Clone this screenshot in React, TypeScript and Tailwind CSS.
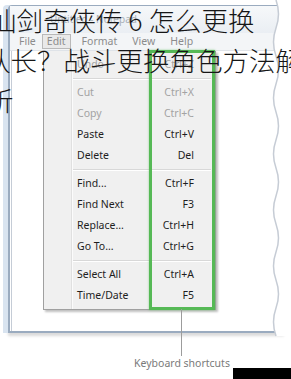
const menuRows: ({ label: string; key: string; off?: boolean } | "sep")[] = [
  { label: "Undo", key: "Ctrl+Z", off: true },
  "sep",
  { label: "Cut", key: "Ctrl+X", off: true },
  { label: "Copy", key: "Ctrl+C", off: true },
  { label: "Paste", key: "Ctrl+V" },
  { label: "Delete", key: "Del" },
  "sep",
  { label: "Find...", key: "Ctrl+F" },
  { label: "Find Next", key: "F3" },
  { label: "Replace...", key: "Ctrl+H" },
  { label: "Go To...", key: "Ctrl+G" },
  "sep",
  { label: "Select All", key: "Ctrl+A" },
  { label: "Time/Date", key: "F5" },
];

function TornEdge() {
  // wavy torn right edge of the screenshot
  let d = "M276 0";
  let y = 0;
  let flip = false;
  while (y < 336) {
    const x = flip ? 271 : 281;
    d += ` Q${x} ${y + 14} 276 ${y + 28}`;
    y += 28;
    flip = !flip;
  }
  const fill = d + " L291 " + y + " L291 0 Z";
  return (
    <svg className="absolute left-0 top-0" width="291" height="340" viewBox="0 0 291 340">
      <path d={fill} fill="#ffffff" />
      <path d={d} fill="none" stroke="#c6ccd5" strokeWidth="1.5" />
    </svg>
  );
}

export default function App() {
  return (
    <div className="relative w-[291px] h-[379px] overflow-hidden bg-white font-['Noto_Sans',sans-serif]">
      {/* Notepad window */}
      <div className="ml-[8px] mt-[5px] w-[276px] h-[328px] flex flex-col border-l-2 border-t border-b-2 border-[#9aabbf] rounded-tl-[4px] shadow-[-5px_0_0_#d9e4f0,0_3px_3px_rgba(0,0,0,0.15)]">
        <div className="h-[27px] bg-gradient-to-b from-[#f6f8fa] to-[#eaeef3] pl-[40px] flex items-center">
          <span className="text-[10px] text-[#a9b0b8]">Untitled - Notepad</span>
        </div>
        <div className="h-[18px] bg-[#f3f5f7] border-b border-[#dfe3e8] flex items-center text-[10.5px] text-[#8c8c8c] pl-[2px]">
          <span className="px-[7px]">File</span>
          <span className="px-[4px] h-[15px] leading-[13px] border border-[#b9b9b9] bg-[#e9e9e9] ml-[-1px]">Edit</span>
          <span className="ml-[11px]">Format</span>
          <span className="ml-[15px]">View</span>
          <span className="ml-[15px]">Help</span>
        </div>
        <div className="flex-1 bg-white border-l border-[#c5ccd6] ml-[1px]" />
      </div>

      {/* Edit menu */}
      <div className="absolute left-[43px] top-[51px] w-[173px] bg-[#f0f0f0] border-l border-b border-r border-[#a0a0a0] shadow-[2px_2px_2px_rgba(0,0,0,0.25)] py-[3px] text-[10.5px]">
        <div className="absolute left-[27px] top-0 bottom-0 w-[2px] border-l border-[#e0e0e0] bg-white/70" />
        {menuRows.map((r, i) =>
          r === "sep" ? (
            <div key={i} className="h-[7px] flex items-center pl-[29px] pr-[4px]">
              <div className="h-[2px] w-full border-t border-[#d8d8d8] bg-white" />
            </div>
          ) : (
            <div key={i} className={`h-[21px] flex items-center pl-[33px] pr-[21px] ${r.off ? "text-[#a3a3a3]" : "text-[#1e1e1e]"}`}>
              <span className="flex-1">{r.label}</span>
              <span>{r.key}</span>
            </div>
          )
        )}
        <div className="absolute left-[105px] top-[-1px] bottom-[-1px] w-[66px] border-[3px] border-[#56b956] shadow-[0_0_2px_rgba(86,185,86,0.6)]" />
      </div>

      <TornEdge />

      {/* callout */}
      <div className="absolute left-[181px] top-[309px] w-px h-[47px] bg-[#9c9c9c]" />
      <div className="mt-[23px] ml-[134px] text-[10.5px] leading-[14px] text-[#7a7a7a]">Keyboard shortcuts</div>

      <div className="absolute right-0 bottom-0 w-[58px] h-[11px] bg-black" />

      {/* article title overlay */}
      <div className="absolute left-[-13px] top-0 text-[26.5px] leading-[40px] text-[#161616] font-light whitespace-nowrap font-['Noto_Sans_CJK_SC','Noto_Sans',sans-serif]">
        <div className="ml-[3px]">仙剑奇侠传 6 怎么更换</div>
        <div className="ml-[-3px]">队长？战斗更换角色方法解</div>
        <div>析</div>
      </div>
    </div>
  );
}
